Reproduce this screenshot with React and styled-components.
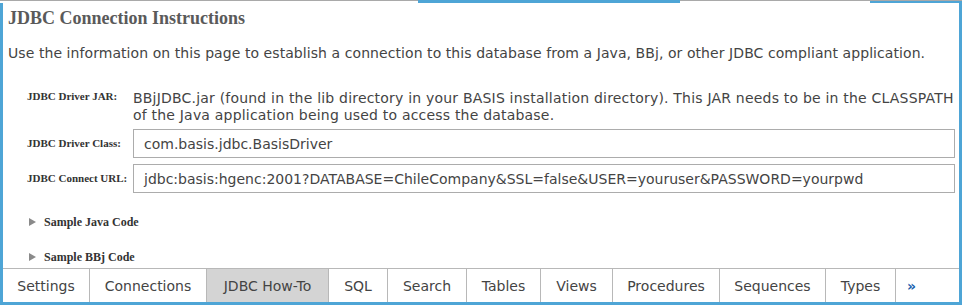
import React from "react";
import styled, { createGlobalStyle } from "styled-components";

const BLUE = "#4ea5d6";
const GRAY_LINE = "#b8b8b8";
const SANS = `Verdana, "DejaVu Sans", sans-serif`;
const SERIF = `"Liberation Serif", "Times New Roman", serif`;

const Global = createGlobalStyle`
  html, body { margin: 0; padding: 0; background: #fff; overflow: hidden; }
  * { box-sizing: border-box; }
`;

const Page = styled.div`
  width: 962px;
  height: 305px;
  display: flex;
  flex-direction: column;
`;

const TopStrip = styled.div`
  height: 3px;
  display: flex;
`;

const EdgeSeg = styled.div`
  width: ${(p) => (p.$w ? `${p.$w}px` : "auto")};
  flex: ${(p) => (p.$w ? "none" : "1")};
  height: 3px;
  border-top: 1px solid ${(p) => (p.$blue ? BLUE : "#a9a9a9")};
  background: ${(p) => (p.$blue ? BLUE : p.$under ? BLUE : "#fff")};
`;

const Panel = styled.div`
  flex: 1;
  display: flex;
  flex-direction: column;
  border-left: 3px solid ${BLUE};
  border-right: 3px solid ${BLUE};
  border-bottom: 3px solid ${BLUE};
  min-height: 0;
`;

const Content = styled.div`
  flex: 1;
  padding: 4px 4px 0 5px;
  color: #444;
  font-family: ${SANS};
`;

const Heading = styled.h1`
  margin: 0;
  font-family: ${SERIF};
  font-weight: bold;
  font-size: 18px;
  line-height: 22px;
  color: #5a5a5a;
`;

const Intro = styled.p`
  margin: 15px 0 0;
  font-size: 14px;
  line-height: 18px;
  letter-spacing: 0.07px;
  color: #444;
`;

const Form = styled.div`
  margin-top: 27px;
  margin-left: 19px;
  display: grid;
  grid-template-columns: 106px 1fr;
  row-gap: 6px;
`;

const Label = styled.div`
  font-family: ${SERIF};
  font-weight: bold;
  font-size: 11px;
  color: #333;
  line-height: ${(p) => p.$lh || "14px"};
  padding-top: ${(p) => p.$pt || "0"};
`;

const Value = styled.div`
  font-size: 14px;
  line-height: 17px;
  letter-spacing: 0.2px;
  color: #444;
  padding-top: 1px;
  margin-bottom: -1px;
`;

const Field = styled.div`
  height: 29px;
  border: 1px solid #acacac;
  padding: 0 10px;
  display: flex;
  align-items: center;
  font-size: 14px;
  color: #444;
  white-space: nowrap;
`;

const Samples = styled.div`
  margin-top: 22px;
  margin-left: 21px;
  display: flex;
  flex-direction: column;
  gap: 21px;
`;

const Summary = styled.div`
  display: flex;
  align-items: center;
  gap: 8px;
  font-family: ${SERIF};
  font-weight: bold;
  font-size: 12px;
  line-height: 14px;
  color: #333;
`;

const Triangle = styled.span`
  width: 0;
  height: 0;
  border-top: 4.5px solid transparent;
  border-bottom: 4.5px solid transparent;
  border-left: 7px solid #8a8a8a;
`;

const TabBar = styled.div`
  height: 34px;
  display: flex;
  border-top: 1px solid ${GRAY_LINE};
`;

const Tab = styled.div`
  width: ${(p) => (p.$w ? `${p.$w}px` : "auto")};
  flex: ${(p) => (p.$w ? "none" : "1")};
  display: flex;
  align-items: center;
  justify-content: ${(p) => (p.$more ? "flex-start" : "center")};
  padding-left: ${(p) => (p.$more ? "11px" : "0")};
  border-right: ${(p) => (p.$more ? "none" : `1px solid ${GRAY_LINE}`)};
  background: ${(p) => (p.$active ? "#d4d4d4" : "#fff")};
  font-family: ${SANS};
  font-size: 14px;
  color: ${(p) => (p.$more ? "#1b5fae" : "#444")};
  font-weight: ${(p) => (p.$more ? "bold" : "normal")};
  white-space: nowrap;
`;

const tabs = [
  { label: "Settings", w: 87 },
  { label: "Connections", w: 117 },
  { label: "JDBC How-To", w: 122, active: true },
  { label: "SQL", w: 59 },
  { label: "Search", w: 79 },
  { label: "Tables", w: 74 },
  { label: "Views", w: 72 },
  { label: "Procedures", w: 107 },
  { label: "Sequences", w: 106 },
  { label: "Types", w: 70 },
];

export default function App() {
  return (
    <Page>
      <Global />
      <TopStrip>
        <EdgeSeg $w={418} />
        <EdgeSeg $w={262} $blue />
        <EdgeSeg $w={190} />
        <EdgeSeg $under />
      </TopStrip>
      <Panel>
        <Content>
          <Heading>JDBC Connection Instructions</Heading>
          <Intro>
            Use the information on this page to establish a connection to this
            database from a Java, BBj, or other JDBC compliant application.
          </Intro>
          <Form>
            <Label>JDBC Driver JAR:</Label>
            <Value>
              BBjJDBC.jar (found in the lib directory in your BASIS installation
              directory). This JAR needs to be in the CLASSPATH of the Java
              application being used to access the database.
            </Value>
            <Label $lh="29px">JDBC Driver Class:</Label>
            <Field>com.basis.jdbc.BasisDriver</Field>
            <Label $lh="29px">JDBC Connect URL:</Label>
            <Field>
              jdbc:basis:hgenc:2001?DATABASE=ChileCompany&amp;SSL=false&amp;USER=youruser&amp;PASSWORD=yourpwd
            </Field>
          </Form>
          <Samples>
            <Summary>
              <Triangle />
              Sample Java Code
            </Summary>
            <Summary>
              <Triangle />
              Sample BBj Code
            </Summary>
          </Samples>
        </Content>
        <TabBar>
          {tabs.map((t) => (
            <Tab key={t.label} $w={t.w} $active={t.active}>
              {t.label}
            </Tab>
          ))}
          <Tab $more>»</Tab>
        </TabBar>
      </Panel>
    </Page>
  );
}
